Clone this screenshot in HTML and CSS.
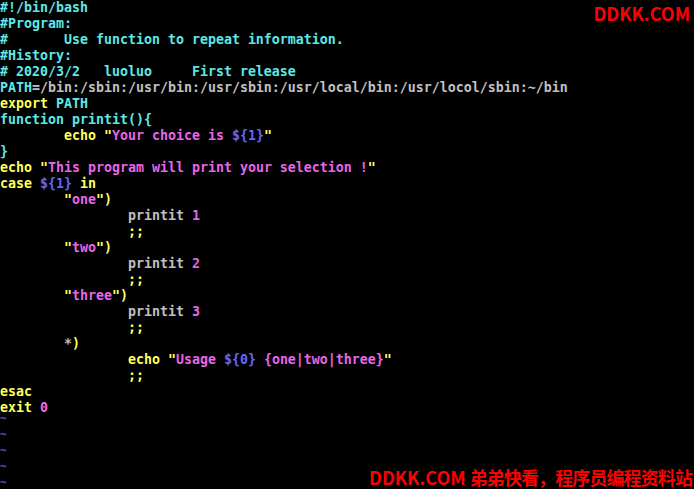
FILE: index.html
```html
<!DOCTYPE html>
<html lang="zh-CN">
<head>
    <meta charset="UTF-8">
    <title>vim printit.sh</title>
    <link rel="stylesheet" href="styles.css">
</head>
<body>
    <!-- Terminal con el script en vim -->
    <div class="term">
        <div class="line"><span class="c">#!/bin/bash</span></div>
        <div class="line"><span class="c">#Program:</span></div>
        <div class="line"><span class="c">#       Use function to repeat information.</span></div>
        <div class="line"><span class="c">#History:</span></div>
        <div class="line"><span class="c"># 2020/3/2   luoluo     First release</span></div>
        <div class="line"><span class="c">PATH</span><span class="g">=/bin:/sbin:/usr/bin:/usr/sbin:/usr/local/bin:/usr/locol/sbin:~/bin</span></div>
        <div class="line"><span class="y">export</span> <span class="c">PATH</span></div>
        <div class="line"><span class="c">function printit(){</span></div>
        <div class="line">        <span class="y">echo</span> <span class="y">"</span><span class="m">Your choice is </span><span class="b">${1}</span><span class="y">"</span></div>
        <div class="line"><span class="c">}</span></div>
        <div class="line"><span class="y">echo</span> <span class="y">"</span><span class="m">This program will print your selection !</span><span class="y">"</span></div>
        <div class="line"><span class="y">case</span> <span class="b">${1}</span> <span class="y">in</span></div>
        <div class="line">        <span class="y">"</span><span class="m">one</span><span class="y">")</span></div>
        <div class="line">                <span class="g">printit</span> <span class="m">1</span></div>
        <div class="line">                <span class="y">;;</span></div>
        <div class="line">        <span class="y">"</span><span class="m">two</span><span class="y">")</span></div>
        <div class="line">                <span class="g">printit</span> <span class="m">2</span></div>
        <div class="line">                <span class="y">;;</span></div>
        <div class="line">        <span class="y">"</span><span class="m">three</span><span class="y">")</span></div>
        <div class="line">                <span class="g">printit</span> <span class="m">3</span></div>
        <div class="line">                <span class="y">;;</span></div>
        <div class="line">        <span class="g">*</span><span class="y">)</span></div>
        <div class="line">                <span class="y">echo</span> <span class="y">"</span><span class="m">Usage </span><span class="b">${0}</span><span class="m"> {one|two|three}</span><span class="y">"</span></div>
        <div class="line">                <span class="y">;;</span></div>
        <div class="line"><span class="y">esac</span></div>
        <div class="line"><span class="y">exit</span> <span class="m">0</span></div>
        <div class="line"><span class="t">~</span></div>
        <div class="line"><span class="t">~</span></div>
        <div class="line"><span class="t">~</span></div>
        <div class="line"><span class="t">~</span></div>
        <div class="line"><span class="t">~</span></div>
    </div>

    <!-- Marcas de agua -->
    <div class="mark mark-top">DDKK.COM</div>
    <div class="mark mark-bottom">DDKK.COM <span class="cn">弟弟快看，程序员编程资料站</span></div>
</body>
</html>
```

FILE: styles.css
```css
html, body {
    margin: 0;
    padding: 0;
    background: #000;
    height: 100%;
    overflow: hidden;
}

body {
    position: relative;
}

/* Terminal */
.term {
    font-family: "DejaVu Sans Mono", "Liberation Mono", monospace;
    font-weight: bold;
    font-size: 13.29px;
    color: #c0c0c0;
}

.line {
    height: 16px;
    line-height: 16px;
    white-space: pre;
}

/* Colores de sintaxis */
.c { color: #5ee8e8; }
.y { color: #ffff5e; }
.m { color: #e866e8; }
.b { color: #6666ff; }
.g { color: #c0c0c0; }
.t {
    color: #5858d8;
    font-size: 11px;
    position: relative;
    top: -6px;
}

/* Marcas de agua */
.mark {
    position: absolute;
    color: #ff0000;
    font-family: "Noto Sans CJK SC", "Noto Sans", sans-serif;
    font-weight: bold;
    font-size: 18px;
    line-height: 1;
    white-space: nowrap;
}

.mark-top {
    top: 4px;
    right: 4px;
}

.mark-bottom {
    bottom: 3px;
    right: 2px;
}

.mark-bottom .cn {
    letter-spacing: -0.9px;
}
```
